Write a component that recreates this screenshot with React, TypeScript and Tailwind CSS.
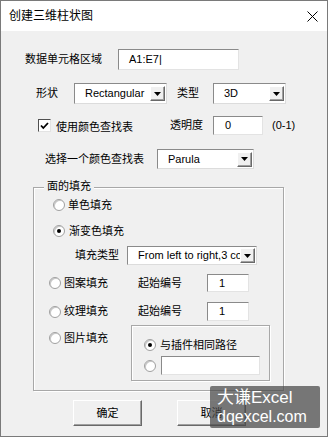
import React from "react";

const FONT = { fontFamily: "'Liberation Sans', 'Noto Sans CJK SC', sans-serif" };

function Arrow() {
  return (
    <div className="flex items-center justify-center w-[15px] h-[15px] bg-[#f0f0f0] border border-t-white border-l-white border-b-[#696969] border-r-[#696969] shadow-[inset_-1px_-1px_0_#a0a0a0]">
      <svg width="7" height="4" viewBox="0 0 7 4">
        <path d="M0 0H7L3.5 4Z" fill="#000" />
      </svg>
    </div>
  );
}

function Select({ w, h, text, pl = 10 }: { w: string; h: string; text: string; pl?: number }) {
  return (
    <div
      className={`${w} ${h} flex items-center bg-white border border-t-[#8a8a8a] border-l-[#8a8a8a] border-b-[#dcdcdc] border-r-[#dcdcdc] overflow-hidden`}
    >
      <div className="flex-1 overflow-hidden whitespace-nowrap" style={{ paddingLeft: pl }}>
        {text}
      </div>
      <div className="mr-[1px]">
        <Arrow />
      </div>
    </div>
  );
}

function Input({ w, h, text, pl = 10 }: { w: string; h: string; text?: string; pl?: number }) {
  return (
    <div
      className={`${w} ${h} flex items-center bg-white border border-t-[#8a8a8a] border-l-[#8a8a8a] border-b-[#e3e3e3] border-r-[#e3e3e3] whitespace-nowrap`}
      style={{ paddingLeft: pl }}
    >
      {text}
    </div>
  );
}

function Radio({ checked }: { checked?: boolean }) {
  return (
    <div className="w-[12px] h-[12px] rounded-full bg-white border border-[#a0a0a0] shadow-[inset_1px_1px_0_#c8c8c8] flex items-center justify-center shrink-0">
      {checked && <div className="w-[4px] h-[4px] rounded-full bg-black" />}
    </div>
  );
}

function Checkbox() {
  return (
    <div className="w-[13px] h-[13px] bg-white border border-t-[#505050] border-l-[#505050] border-b-[#e3e3e3] border-r-[#e3e3e3] flex items-center justify-center shrink-0">
      <svg width="9" height="8" viewBox="0 0 9 8">
        <path d="M1 3.5L3.3 6L8 1" stroke="#000" strokeWidth="1.8" fill="none" />
      </svg>
    </div>
  );
}

function Button({ text }: { text: string }) {
  return (
    <div className="w-[69px] h-[26px] flex items-center justify-center bg-[#f0f0f0] border border-t-white border-l-white border-b-[#696969] border-r-[#696969] shadow-[inset_-1px_-1px_0_#a0a0a0]">
      {text}
    </div>
  );
}

export default function App() {
  return (
    <div
      className="relative w-[328px] h-[437px] overflow-hidden bg-[#f0f0f0] border border-[#7a7a7a] text-[11px] text-black leading-none"
      style={FONT}
    >
      {/* title bar */}
      <div className="h-[30px] bg-white flex items-center justify-between pl-[8px] pr-[9px]">
        <span className="text-[12px]">创建三维柱状图</span>
        <svg width="11" height="11" viewBox="0 0 11 11">
          <path d="M0.5 0.5L10.5 10.5M10.5 0.5L0.5 10.5" stroke="#000" strokeWidth="1" />
        </svg>
      </div>

      {/* row 1 */}
      <div className="mt-[18px] h-[21px] flex items-center">
        <span className="ml-[24px]">数据单元格区域</span>
        <div className="ml-[16px]">
          <Input w="w-[121px]" h="h-[21px]" text="A1:E7|" pl={10} />
        </div>
      </div>

      {/* row 2 */}
      <div className="mt-[13px] h-[21px] flex items-center">
        <span className="ml-[35px]">形状</span>
        <div className="ml-[16px]">
          <Select w="w-[93px]" h="h-[21px]" text="Rectangular" />
        </div>
        <span className="ml-[10px]">类型</span>
        <div className="ml-[14px]">
          <Select w="w-[73px]" h="h-[21px]" text="3D" />
        </div>
      </div>

      {/* row 3 */}
      <div className="mt-[12px] h-[19px] flex items-center">
        <div className="ml-[37px]">
          <Checkbox />
        </div>
        <span className="ml-[5px] mt-[3px]">使用颜色查找表</span>
        <span className="ml-[37px]">透明度</span>
        <div className="ml-[10px]">
          <Input w="w-[50px]" h="h-[19px]" text="0" pl={11} />
        </div>
        <span className="ml-[9px]">(0-1)</span>
      </div>

      {/* row 4 */}
      <div className="mt-[14px] h-[20px] flex items-center">
        <span className="ml-[44px]">选择一个颜色查找表</span>
        <div className="ml-[13px]">
          <Select w="w-[97px]" h="h-[20px]" text="Parula" />
        </div>
      </div>

      {/* group box */}
      <div className="relative mt-[18px] ml-[32px] w-[251px] h-[204px] border border-[#a8a8a8] shadow-[inset_1px_1px_0_#fff,1px_1px_0_#fff] flex flex-col">
        <span className="absolute -top-[7px] left-[10px] px-[3px] bg-[#f0f0f0]">面的填充</span>

        <div className="mt-[9px] h-[16px] flex items-center">
          <div className="ml-[19px]">
            <Radio />
          </div>
          <span className="ml-[3px]">单色填充</span>
        </div>

        <div className="mt-[10px] h-[16px] flex items-center">
          <div className="ml-[19px]">
            <Radio checked />
          </div>
          <span className="ml-[4px]">渐变色填充</span>
        </div>

        <div className="mt-[7px] h-[19px] flex items-center">
          <span className="ml-[41px]">填充类型</span>
          <div className="ml-[8px]">
            <Select w="w-[130px]" h="h-[19px]" text="From left to right,3 colors" pl={10} />
          </div>
        </div>

        <div className="mt-[9px] h-[18px] flex items-center">
          <div className="ml-[15px]">
            <Radio />
          </div>
          <span className="ml-[3px]">图案填充</span>
          <span className="ml-[30px]">起始编号</span>
          <div className="ml-[25px]">
            <Input w="w-[42px]" h="h-[18px]" text="1" pl={11} />
          </div>
        </div>

        <div className="mt-[10px] h-[19px] flex items-center">
          <div className="ml-[15px]">
            <Radio />
          </div>
          <span className="ml-[3px]">纹理填充</span>
          <span className="ml-[30px]">起始编号</span>
          <div className="ml-[25px]">
            <Input w="w-[42px]" h="h-[19px]" text="1" pl={11} />
          </div>
        </div>

        <div className="mt-[4px] flex items-start">
          <div className="ml-[15px] w-[82px] mt-[6px] h-[14px] flex items-center">
            <Radio />
            <span className="ml-[3px]">图片填充</span>
          </div>
          <div className="w-[139px] h-[56px] border border-[#a8a8a8] shadow-[inset_1px_1px_0_#fff,1px_1px_0_#fff] flex flex-col">
            <div className="mt-[11px] h-[16px] flex items-center">
              <div className="ml-[12px]">
                <Radio checked />
              </div>
              <span className="ml-[4px]">与插件相同路径</span>
            </div>
            <div className="mt-[3px] h-[19px] flex items-center">
              <div className="ml-[12px]">
                <Radio />
              </div>
              <div className="ml-[5px]">
                <Input w="w-[99px]" h="h-[19px]" />
              </div>
            </div>
          </div>
        </div>
      </div>

      {/* buttons */}
      <div className="mt-[9px] flex items-center">
        <div className="ml-[72px]">
          <Button text="确定" />
        </div>
        <div className="ml-[35px]">
          <Button text="取消" />
        </div>
      </div>

      {/* watermark */}
      <div className="absolute left-[209px] top-[385px] w-[110px] h-[42px] rounded-[2px] bg-[rgba(70,70,70,0.72)] text-white text-[17px] leading-[19px] pl-[7px] pt-[2px] whitespace-nowrap">
        <div>大谦Excel</div>
        <div className="text-[16px]">dqexcel.com</div>
      </div>
    </div>
  );
}
